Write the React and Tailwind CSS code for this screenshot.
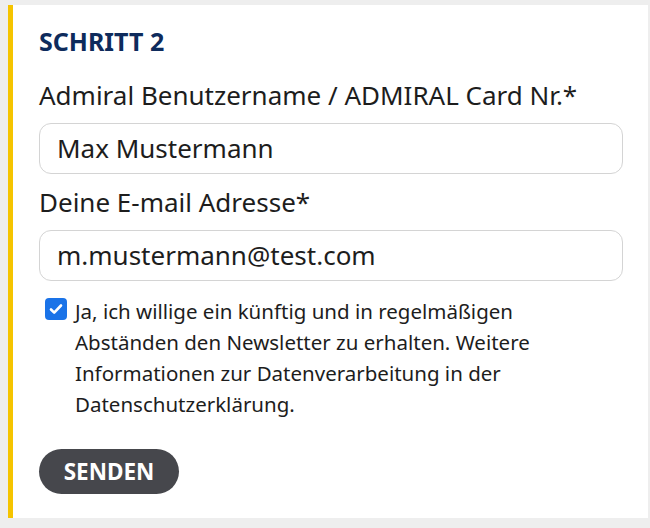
import React from "react";

const Field = ({ label, value }) => (
  <div className="flex flex-col">
    <label className="text-[26px] leading-[34px] text-[#1d1d1d]">{label}</label>
    <div className="mt-[11px] h-[51px] rounded-[12px] border border-[#d4d4d4] bg-white flex items-center px-[17px] text-[26px] text-[#1d1d1d]">
      {value}
    </div>
  </div>
);

const App = () => {
  return (
    <div
      className="w-[650px] h-[528px] bg-[#eeeeee] pt-[5px] pl-[8px] pr-[2px] pb-[10px]"
      style={{ fontFamily: '"Noto Sans", "Open Sans", sans-serif' }}
    >
      <div className="h-full bg-white border-l-[5px] border-[#f5c400] pl-[26px] pr-[25px] pt-[20px] flex flex-col">
        <h2 className="text-[25px] leading-[32px] font-bold text-[#0e2b5c]">SCHRITT 2</h2>
        <div className="mt-[21px] flex flex-col gap-[11px]">
          <Field label="Admiral Benutzername / ADMIRAL Card Nr.*" value="Max Mustermann" />
          <Field label="Deine E-mail Adresse*" value="m.mustermann@test.com" />
        </div>
        <div className="mt-[15px] flex items-start gap-[8px] pl-[6px]">
          <span className="mt-[2px] w-[22px] h-[22px] shrink-0 rounded-[4px] bg-[#1a73e8] flex items-center justify-center">
            <svg width="16" height="16" viewBox="0 0 16 16" fill="none">
              <path d="M3 8.5l3.2 3.2L13 4.5" stroke="white" strokeWidth="2.6" strokeLinecap="round" strokeLinejoin="round" />
            </svg>
          </span>
          <p className="text-[20.5px] leading-[31px] text-[#1d1d1d] max-w-[500px]">
            Ja, ich willige ein künftig und in regelmäßigen Abständen den Newsletter zu erhalten. Weitere Informationen zur Datenverarbeitung in der Datenschutzerklärung.
          </p>
        </div>
        <div className="mt-[29px]">
          <button className="h-[45px] w-[140px] rounded-full bg-[#46474c] text-white font-bold text-[22.5px]">
            SENDEN
          </button>
        </div>
      </div>
    </div>
  );
};

export default App;
